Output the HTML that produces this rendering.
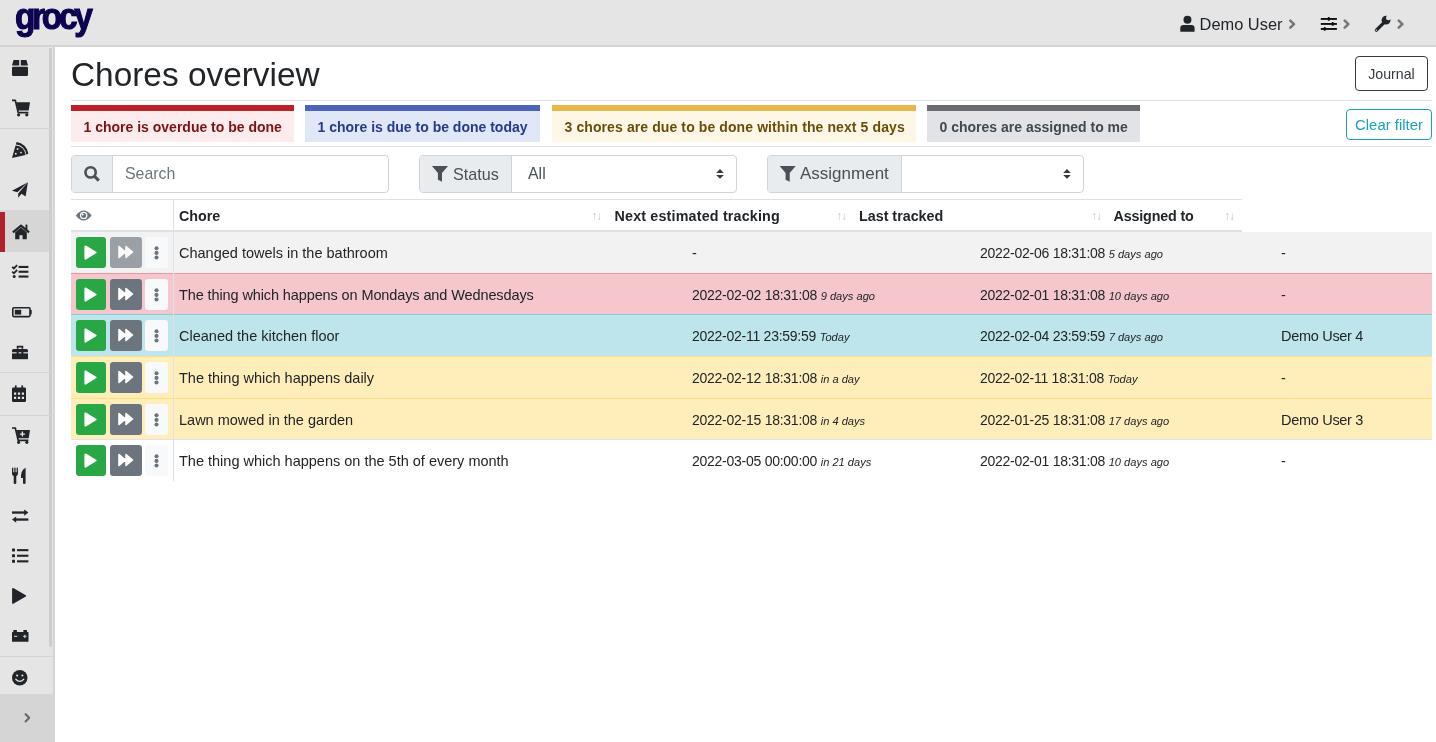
<!DOCTYPE html>
<html><head><meta charset="utf-8">
<style>
*{box-sizing:border-box;margin:0;padding:0}
html,body{width:1436px;height:742px;overflow:hidden;background:#fff;font-family:"Liberation Sans",sans-serif;color:#212529}
.abs{position:absolute}
#nav{left:0;top:0;width:1436px;height:47px;background:#e5e5e5;border-bottom:2px solid #d4d4d4}
#side{left:0;top:47px;width:55px;height:695px;background:#e5e5e5}
#content{left:55px;top:47px;width:1381px;height:695px;background:#fff}
.ico{position:absolute;fill:#212529}
h2.title{position:absolute;left:71px;top:52.8px;font-size:33.4px;font-weight:400;line-height:44px;color:#212529;white-space:nowrap}
.hr{position:absolute;left:71px;width:1361px;height:1px;background:#dee2e6}
.btn{position:absolute;border:1px solid;border-radius:4px;font-size:14.2px;text-align:center;white-space:nowrap}
.msg{position:absolute;top:105px;height:37px;border-top:6px solid;font-weight:700;font-size:14px;line-height:33px;white-space:nowrap;padding-left:12.5px}
.ig{position:absolute;top:155px;height:38px;border:1px solid #ced4da;border-radius:4px;background:#fff}
.pre{position:absolute;left:0;top:0;bottom:0;background:#e9ecef;border-right:1px solid #ced4da;border-radius:3px 0 0 3px}
.txt{position:absolute;white-space:nowrap;line-height:20px}

.tr{position:absolute;left:71px;width:1361px}
.b-play,.b-fwd,.b-dots{position:absolute;height:31px;border-radius:3.2px}
.b-play{left:5px;width:30px;background:#28a745}
.b-play svg{position:absolute;left:8.3px;top:7.6px}
.b-fwd{left:39px;width:32px;background:#6c757d}
.b-fwd svg{position:absolute;left:7px;top:7.5px}
.b-dots{left:74px;width:23px;background:#f8f9fa}
.b-dots i{position:absolute;left:9.6px;width:3.8px;height:3.8px;border-radius:50%;background:#6c757d}
.td{position:absolute;top:12px;line-height:21px;font-size:14.5px;white-space:nowrap;color:#212529}
.dt{font-size:14px;letter-spacing:-0.26px;top:11px}
.dt .ta{letter-spacing:0}
.tr .td{top:11.4px}
.tr .dt{top:10.9px}
.tb .td{top:11px}
.tb .dt{top:10.6px}
.ta{font-style:italic;font-size:11.1px}
.vline{position:absolute;left:173px;top:199px;width:1px;height:282px;background:#dee2e6}
.thead{position:absolute;left:71px;top:199px;width:1171px;height:33px;border-top:1px solid #dee2e6;border-bottom:2px solid #dee2e6}
.th{position:absolute;top:5.6px;margin-left:-1px;line-height:21px;font-weight:700;font-size:14.3px;white-space:nowrap;color:#212529}
.sort{position:absolute;top:6px;margin-left:-1px;font-size:12px;color:#c8c8c8;line-height:21px;letter-spacing:-1px}
</style></head><body><div id="root" style="position:absolute;left:0;top:0;width:1436px;height:742px;will-change:transform">
<div id="nav" class="abs">
  <div class="abs" style="left:15px;top:-3px;font-size:36px;font-weight:700;color:#0b0250;letter-spacing:-3.6px;line-height:40px;transform:scale(0.93,1);-webkit-text-stroke:1.1px #0b0250;transform-origin:0 0">grocy</div>
  <div class="txt" style="left:1199.6px;top:14px;font-size:16.4px;color:#212529">Demo User</div>
</div>
<div id="content" class="abs"></div>

<h2 class="title">Chores overview</h2>
<div class="btn" style="left:1355px;top:56px;width:73px;height:35px;border-color:#343a40;color:#343a40;line-height:34px">Journal</div>
<div class="hr" style="top:100px"></div>
<div class="msg" style="left:71px;width:223px;border-color:#bb2227;background:#fdeced;color:#7d1114">1 chore is overdue to be done</div>
<div class="msg" style="left:305px;width:235px;border-color:#4c63b6;background:#e0e7f7;color:#263a8c">1 chore is due to be done today</div>
<div class="msg" style="left:552px;width:364px;border-color:#e6b84a;background:#fff7e6;color:#6b4d0a;letter-spacing:0.1px">3 chores are due to be done within the next 5 days</div>
<div class="msg" style="left:927px;width:213px;border-color:#6a6c70;background:#e1e3e6;color:#404850">0 chores are assigned to me</div>
<div class="btn" style="left:1346px;top:109px;width:86px;height:31px;border-color:#17a2b8;color:#17a2b8;line-height:30px;font-size:14.9px">Clear filter</div>
<div class="hr" style="top:146px"></div>

<div class="ig" style="left:71px;width:318px">
  <div class="pre" style="width:41px"></div>
  <div class="txt" style="left:53px;top:8px;font-size:15.9px;color:#6c757d">Search</div>
</div>
<div class="ig" style="left:419px;width:318px">
  <div class="pre" style="width:92px"></div>
  <div class="txt" style="left:33px;top:8px;font-size:16.2px;color:#495057">Status</div>
  <div class="txt" style="left:108px;top:8px;font-size:15.9px;color:#495057">All</div>
</div>
<div class="ig" style="left:767px;width:317px">
  <div class="pre" style="width:134px"></div>
  <div class="txt" style="left:32px;top:8px;font-size:17px;color:#495057">Assignment</div>
</div>


<div class="thead">
  <div class="th" style="left:109px">Chore</div><div class="sort" style="left:521px">↑↓</div>
  <div class="th" style="left:544.5px;letter-spacing:0.18px">Next estimated tracking</div><div class="sort" style="left:766px">↑↓</div>
  <div class="th" style="left:789px">Last tracked</div><div class="sort" style="left:1021px">↑↓</div>
  <div class="th" style="left:1043.5px;letter-spacing:-0.15px">Assigned to</div><div class="sort" style="left:1154px">↑↓</div>
</div>
<div class="tr" style="top:232.0px;height:41.0px;background:#f2f2f2;">
  <div class="b-play" style="top:4.8px"><svg width="14" height="16" viewBox="0 0 14 16"><path d="M1.4 2.4 L11.6 8.5 L1.4 14.6 Z" fill="#fff" stroke="#fff" stroke-width="2" stroke-linejoin="round"/></svg></div>
  <div class="b-fwd" style="top:4.8px;opacity:.65;"><svg width="18" height="16" viewBox="0 0 18 16"><path d="M2 2.5 L8.5 8 L2 13.5 Z M9 2.5 L15.5 8 L9 13.5 Z" fill="#fff" stroke="#fff" stroke-width="1.6" stroke-linejoin="round"/></svg></div>
  <div class="b-dots" style="top:4.8px"><svg width="23" height="31" viewBox="0 0 23 31" style="position:absolute;left:0;top:0"><g fill="#6c757d"><circle cx="11.5" cy="11.3" r="2.05"/><circle cx="11.5" cy="15.9" r="2.05"/><circle cx="11.5" cy="20.5" r="2.05"/></g></svg></div>
  <div class="td" style="left:108px">Changed towels in the bathroom</div>
  <div class="td" style="left:621px">-</div>
  <div class="td dt" style="left:909px">2022-02-06 18:31:08 <span class="ta">5 days ago</span></div>
  <div class="td" style="left:1210px;letter-spacing:-0.3px">-</div>
</div>
<div class="tr tb" style="top:273.0px;height:41.0px;background:#f5c6cb;border-top:1px solid #ed969e;">
  <div class="b-play" style="top:4.8px"><svg width="14" height="16" viewBox="0 0 14 16"><path d="M1.4 2.4 L11.6 8.5 L1.4 14.6 Z" fill="#fff" stroke="#fff" stroke-width="2" stroke-linejoin="round"/></svg></div>
  <div class="b-fwd" style="top:4.8px;"><svg width="18" height="16" viewBox="0 0 18 16"><path d="M2 2.5 L8.5 8 L2 13.5 Z M9 2.5 L15.5 8 L9 13.5 Z" fill="#fff" stroke="#fff" stroke-width="1.6" stroke-linejoin="round"/></svg></div>
  <div class="b-dots" style="top:4.8px"><svg width="23" height="31" viewBox="0 0 23 31" style="position:absolute;left:0;top:0"><g fill="#6c757d"><circle cx="11.5" cy="11.3" r="2.05"/><circle cx="11.5" cy="15.9" r="2.05"/><circle cx="11.5" cy="20.5" r="2.05"/></g></svg></div>
  <div class="td" style="left:108px;letter-spacing:-0.11px">The thing which happens on Mondays and Wednesdays</div>
  <div class="td dt" style="left:621px">2022-02-02 18:31:08 <span class="ta">9 days ago</span></div>
  <div class="td dt" style="left:909px">2022-02-01 18:31:08 <span class="ta">10 days ago</span></div>
  <div class="td" style="left:1210px;letter-spacing:-0.3px">-</div>
</div>
<div class="tr tb" style="top:314.0px;height:42.0px;background:#bee5eb;border-top:1px solid #86cfda;">
  <div class="b-play" style="top:4.8px"><svg width="14" height="16" viewBox="0 0 14 16"><path d="M1.4 2.4 L11.6 8.5 L1.4 14.6 Z" fill="#fff" stroke="#fff" stroke-width="2" stroke-linejoin="round"/></svg></div>
  <div class="b-fwd" style="top:4.8px;"><svg width="18" height="16" viewBox="0 0 18 16"><path d="M2 2.5 L8.5 8 L2 13.5 Z M9 2.5 L15.5 8 L9 13.5 Z" fill="#fff" stroke="#fff" stroke-width="1.6" stroke-linejoin="round"/></svg></div>
  <div class="b-dots" style="top:4.8px"><svg width="23" height="31" viewBox="0 0 23 31" style="position:absolute;left:0;top:0"><g fill="#6c757d"><circle cx="11.5" cy="11.3" r="2.05"/><circle cx="11.5" cy="15.9" r="2.05"/><circle cx="11.5" cy="20.5" r="2.05"/></g></svg></div>
  <div class="td" style="left:108px">Cleaned the kitchen floor</div>
  <div class="td dt" style="left:621px">2022-02-11 23:59:59 <span class="ta">Today</span></div>
  <div class="td dt" style="left:909px">2022-02-04 23:59:59 <span class="ta">7 days ago</span></div>
  <div class="td" style="left:1210px;letter-spacing:-0.3px">Demo User 4</div>
</div>
<div class="tr tb" style="top:356.0px;height:42.0px;background:#ffeeba;border-top:1px solid #ffdf7e;">
  <div class="b-play" style="top:4.8px"><svg width="14" height="16" viewBox="0 0 14 16"><path d="M1.4 2.4 L11.6 8.5 L1.4 14.6 Z" fill="#fff" stroke="#fff" stroke-width="2" stroke-linejoin="round"/></svg></div>
  <div class="b-fwd" style="top:4.8px;"><svg width="18" height="16" viewBox="0 0 18 16"><path d="M2 2.5 L8.5 8 L2 13.5 Z M9 2.5 L15.5 8 L9 13.5 Z" fill="#fff" stroke="#fff" stroke-width="1.6" stroke-linejoin="round"/></svg></div>
  <div class="b-dots" style="top:4.8px"><svg width="23" height="31" viewBox="0 0 23 31" style="position:absolute;left:0;top:0"><g fill="#6c757d"><circle cx="11.5" cy="11.3" r="2.05"/><circle cx="11.5" cy="15.9" r="2.05"/><circle cx="11.5" cy="20.5" r="2.05"/></g></svg></div>
  <div class="td" style="left:108px">The thing which happens daily</div>
  <div class="td dt" style="left:621px">2022-02-12 18:31:08 <span class="ta">in a day</span></div>
  <div class="td dt" style="left:909px">2022-02-11 18:31:08 <span class="ta">Today</span></div>
  <div class="td" style="left:1210px;letter-spacing:-0.3px">-</div>
</div>
<div class="tr tb" style="top:398.0px;height:41.0px;background:#ffeeba;border-top:1px solid #ffdf7e;">
  <div class="b-play" style="top:4.8px"><svg width="14" height="16" viewBox="0 0 14 16"><path d="M1.4 2.4 L11.6 8.5 L1.4 14.6 Z" fill="#fff" stroke="#fff" stroke-width="2" stroke-linejoin="round"/></svg></div>
  <div class="b-fwd" style="top:4.8px;"><svg width="18" height="16" viewBox="0 0 18 16"><path d="M2 2.5 L8.5 8 L2 13.5 Z M9 2.5 L15.5 8 L9 13.5 Z" fill="#fff" stroke="#fff" stroke-width="1.6" stroke-linejoin="round"/></svg></div>
  <div class="b-dots" style="top:4.8px"><svg width="23" height="31" viewBox="0 0 23 31" style="position:absolute;left:0;top:0"><g fill="#6c757d"><circle cx="11.5" cy="11.3" r="2.05"/><circle cx="11.5" cy="15.9" r="2.05"/><circle cx="11.5" cy="20.5" r="2.05"/></g></svg></div>
  <div class="td" style="left:108px">Lawn mowed in the garden</div>
  <div class="td dt" style="left:621px">2022-02-15 18:31:08 <span class="ta">in 4 days</span></div>
  <div class="td dt" style="left:909px">2022-01-25 18:31:08 <span class="ta">17 days ago</span></div>
  <div class="td" style="left:1210px;letter-spacing:-0.3px">Demo User 3</div>
</div>
<div class="tr tb" style="top:439.0px;height:42.0px;background:#ffffff;border-top:1px solid #dee2e6;">
  <div class="b-play" style="top:4.8px"><svg width="14" height="16" viewBox="0 0 14 16"><path d="M1.4 2.4 L11.6 8.5 L1.4 14.6 Z" fill="#fff" stroke="#fff" stroke-width="2" stroke-linejoin="round"/></svg></div>
  <div class="b-fwd" style="top:4.8px;"><svg width="18" height="16" viewBox="0 0 18 16"><path d="M2 2.5 L8.5 8 L2 13.5 Z M9 2.5 L15.5 8 L9 13.5 Z" fill="#fff" stroke="#fff" stroke-width="1.6" stroke-linejoin="round"/></svg></div>
  <div class="b-dots" style="top:4.8px"><svg width="23" height="31" viewBox="0 0 23 31" style="position:absolute;left:0;top:0"><g fill="#6c757d"><circle cx="11.5" cy="11.3" r="2.05"/><circle cx="11.5" cy="15.9" r="2.05"/><circle cx="11.5" cy="20.5" r="2.05"/></g></svg></div>
  <div class="td" style="left:108px">The thing which happens on the 5th of every month</div>
  <div class="td dt" style="left:621px">2022-03-05 00:00:00 <span class="ta">in 21 days</span></div>
  <div class="td dt" style="left:909px">2022-02-01 18:31:08 <span class="ta">10 days ago</span></div>
  <div class="td" style="left:1210px;letter-spacing:-0.3px">-</div>
</div>

<div class="vline"></div>
<div class="abs" style="left:0;top:47px;width:49px;height:695px;background:#e5e5e5"></div>
<div class="abs" style="left:49px;top:47px;width:4px;height:695px;background:#e3e3e3"></div>
<div class="abs" style="left:48.8px;top:47.5px;width:2.8px;height:599px;background:#cdcdcd;border-radius:1.4px"></div>
<div class="abs" style="left:53px;top:47px;width:2px;height:695px;background:#d5d5d5"></div>
<div class="abs" style="left:0;top:128px;width:55px;height:1px;background:#d4d4d4"></div>
<div class="abs" style="left:0;top:372px;width:55px;height:1px;background:#d4d4d4"></div>
<div class="abs" style="left:0;top:415px;width:55px;height:1px;background:#d4d4d4"></div>
<div class="abs" style="left:0;top:656px;width:55px;height:1px;background:#d4d4d4"></div>
<div class="abs" style="left:0;top:210px;width:49px;height:42px;background:#d6d6d6"></div>
<div class="abs" style="left:0;top:212px;width:5px;height:40px;background:#b0202f"></div>
<div class="abs" style="left:0;top:694px;width:55px;height:48px;background:#d5d5d5"></div>
<svg class="abs" style="left:0;top:0" width="1436" height="742" viewBox="0 0 1436 742">
<g fill="#212529">
 <!-- box -->
 <path d="M13.6,60 H19.2 V65.6 H12 Z M20.8,60 H26.4 L28,65.6 H20.8 Z"/>
 <rect x="12" y="66.8" width="16" height="9.2" rx="1.3"/>
 <!-- cart -->
 <path d="M12,100.3 H15.3 L18.2,112.6 H28.4" fill="none" stroke="#212529" stroke-width="1.7" stroke-linejoin="round"/>
 <path d="M16.4,102.3 H30 L28.7,110.6 H18.2 Z"/>
 <circle cx="18.6" cy="114.8" r="1.6"/><circle cx="26.8" cy="114.8" r="1.6"/>
 <!-- pizza -->
 <path d="M16.5,142.1 A13.2,13.2 0 0 1 28.4,153.8 L26.2,154.4 A10.9,10.9 0 0 0 15.9,144.5 Z"/>
 <path d="M12,158 L15.5,145.6 A10,10 0 0 1 25.6,155 Z"/>
 <g fill="#e5e5e5"><circle cx="17.6" cy="149" r="0.9"/><circle cx="21" cy="152.6" r="0.9"/><circle cx="15.8" cy="153.8" r="0.95"/></g>
 <!-- paper plane -->
 <path d="M12,190.7 L27.9,182.3 L17.4,192.3 Z"/>
 <path d="M27.9,182.3 L25.6,196.4 L21.5,193.8 L18.2,197.8 L18.2,193.4 Z"/>
 <!-- home -->
 <path d="M12.9,232.3 L21,225.6 L29.1,232.3" fill="none" stroke="#212529" stroke-width="2.2"/>
 <rect x="25.5" y="224.6" width="1.9" height="5.4"/>
 <path d="M15.2,232.2 L21,227.4 L26.8,232.2 V239.2 H22.6 V235.3 H19.4 V239.2 H15.2 Z"/>
 <!-- tasks -->
 <rect x="18.6" y="265.9" width="9.8" height="2.1"/><rect x="18.6" y="270.7" width="9.8" height="2.1"/><rect x="18.6" y="275.5" width="9.8" height="2.1"/>
 <path d="M12.2,266.9 L13.9,268.5 L17.1,265.2 M12.2,271.7 L13.9,273.3 L17.1,270" fill="none" stroke="#212529" stroke-width="1.8"/>
 <circle cx="14.2" cy="276.6" r="1.5"/>
 <!-- battery -->
 <rect x="12.8" y="307.8" width="17.2" height="8.8" rx="1" fill="none" stroke="#212529" stroke-width="1.6"/>
 <rect x="30" y="310" width="1.7" height="4.4"/>
 <rect x="14.8" y="309.8" width="6.4" height="4.8"/>
 <!-- toolbox -->
 <path d="M17.6,348.8 V346.6 H22.4 V348.8" fill="none" stroke="#212529" stroke-width="1.7"/>
 <path d="M12,352.2 V350.6 Q12,349 13.6,349 H26.4 Q28,349 28,350.6 V352.2 Z"/>
 <rect x="12" y="353.4" width="16" height="5.8"/>
 <rect x="16.6" y="351.6" width="2" height="3"/><rect x="21.4" y="351.6" width="2" height="3"/>
 <!-- calendar -->
 <rect x="14.9" y="385.4" width="1.7" height="3.2"/><rect x="21.4" y="385.4" width="1.7" height="3.2"/>
 <path d="M13.3,387.4 H24.7 Q26,387.4 26,388.7 V400.7 Q26,402 24.7,402 H13.3 Q12,402 12,400.7 V388.7 Q12,387.4 13.3,387.4 Z M14,392.6 V394.8 H16.2 V392.6 Z M17.9,392.6 V394.8 H20.1 V392.6 Z M21.8,392.6 V394.8 H24 V392.6 Z M14,396.8 V399 H16.2 V396.8 Z M17.9,396.8 V399 H20.1 V396.8 Z M21.8,396.8 V399 H24 V396.8 Z" fill-rule="evenodd"/>
 <!-- cart plus -->
 <path d="M12,428 H15.3 L18.2,440.3 H28.4" fill="none" stroke="#212529" stroke-width="1.7" stroke-linejoin="round"/>
 <path d="M16.4,430 H30 L28.7,438.3 H18.2 Z"/>
 <circle cx="18.6" cy="442.3" r="1.6"/><circle cx="26.8" cy="442.3" r="1.6"/>
 <path d="M22.4,431.6 V436.6 M19.9,434.1 H24.9" stroke="#e5e5e5" stroke-width="1.4"/>
 <!-- utensils -->
 <rect x="12" y="467.7" width="1.3" height="6"/><rect x="14.3" y="467.7" width="1.3" height="6"/><rect x="16.6" y="467.7" width="1.3" height="6"/>
 <path d="M12,472.3 H17.9 V473.8 Q17.9,475.6 16.3,475.9 V483 Q16.3,484 15,484 Q13.7,484 13.7,483 V475.9 Q12,475.6 12,473.8 Z"/>
 <path d="M25.6,467.7 V483 Q25.6,484 24.3,484 Q23,484 23,483 V478 H21 Q20.6,470.3 25.6,467.7 Z"/>
 <!-- exchange -->
 <rect x="12" y="511.4" width="13.4" height="2.3"/><path d="M24.2,509.4 L28.4,512.55 L24.2,515.7 Z"/>
 <rect x="15" y="518.4" width="13.4" height="2.3"/><path d="M16.2,516.4 L12,519.55 L16.2,522.7 Z"/>
 <!-- list -->
 <rect x="12" y="548.6" width="3" height="3" rx="0.5"/><rect x="12" y="554.2" width="3" height="3" rx="0.5"/><rect x="12" y="559.8" width="3" height="3" rx="0.5"/>
 <rect x="17" y="549.1" width="11.4" height="2.1"/><rect x="17" y="554.7" width="11.4" height="2.1"/><rect x="17" y="560.3" width="11.4" height="2.1"/>
 <!-- play -->
 <path d="M12.9,588.8 L25.4,595.9 L12.9,603 Z" stroke="#212529" stroke-width="1.6" stroke-linejoin="round"/>
 <!-- car battery -->
 <rect x="13.3" y="630" width="3.6" height="2.4"/><rect x="23.4" y="630" width="3.6" height="2.4"/>
 <rect x="12" y="632" width="16.5" height="9.7" rx="0.5"/>
 <path d="M14.1,636.4 H17.3 M23.2,636.4 H26.4 M24.8,634.8 V638" stroke="#bdbdbd" stroke-width="1.3"/>
 <!-- smile -->
 <circle cx="19.75" cy="677.7" r="7.75"/>
 <g fill="#e5e5e5"><circle cx="17.1" cy="675.4" r="1"/><circle cx="22.4" cy="675.4" r="1"/></g>
 <path d="M15.8,679.2 Q19.75,683.4 23.7,679.2" fill="none" stroke="#e5e5e5" stroke-width="1.3" stroke-linecap="round"/>
</g>
<!-- bottom chevron -->
<path d="M25.6,714.2 L29.2,717.8 L25.6,721.4" fill="none" stroke="#666" stroke-width="2.1" stroke-linecap="round" stroke-linejoin="round"/>
<!-- nav right -->
<g fill="#212529">
 <circle cx="1187.45" cy="19.8" r="4"/>
 <path d="M1180.3,31.8 V28.3 Q1180.3,25.1 1183.5,25.1 H1191.4 Q1194.6,25.1 1194.6,28.3 V31.8 Z"/>
</g>
<g fill="#111">
 <rect x="1320.8" y="18" width="16.1" height="1.9"/><rect x="1320.8" y="23" width="16.1" height="1.9"/><rect x="1320.8" y="28" width="16.1" height="1.9"/>
 <rect x="1327.8" y="17.1" width="2" height="3.7" rx="0.6"/><rect x="1331.7" y="22.1" width="2" height="3.7" rx="0.6"/><rect x="1323.7" y="27.1" width="2" height="3.7" rx="0.6"/>
</g>
<g>
 <path d="M1376.4,30.2 L1384,22.6" stroke="#212529" stroke-width="3.3" stroke-linecap="round"/>
 <circle cx="1386" cy="20.2" r="4.4" fill="#212529"/>
 <circle cx="1388.3" cy="17.9" r="2.3" fill="#e5e5e5"/>
 <path d="M1388.3,15.6 L1392.5,15.6 L1392.5,20.2 L1390.6,17.9 Z" fill="#e5e5e5"/>
 <circle cx="1376.3" cy="30.3" r="0.75" fill="#e5e5e5"/>
</g>
<g fill="none" stroke="#777" stroke-width="2.6" stroke-linecap="round" stroke-linejoin="round">
 <path d="M1290.3,20.6 L1294,24.1 L1290.3,27.6"/>
 <path d="M1344.7,20.6 L1348.4,24.1 L1344.7,27.6"/>
 <path d="M1398.7,20.6 L1402.4,24.1 L1398.7,27.6"/>
</g>
<!-- search -->
<g fill="none" stroke="#495057">
 <circle cx="90.6" cy="172.4" r="5.1" stroke-width="2.6"/>
 <path d="M94.6,176.4 L98.8,180.6" stroke-width="3"/>
</g>
<!-- filters -->
<path d="M431.9,166.1 H448 L442,172.9 V181.8 L437.9,179.8 V172.9 Z" fill="#495057"/>
<path d="M779.6,166.1 H795.7 L789.7,172.9 V181.8 L785.6,179.8 V172.9 Z" fill="#495057"/>
<!-- select arrows -->
<path d="M720,169.1 L723.8,172.9 H716.2 Z M716.2,175 H723.8 L720,178.8 Z" fill="#343a40"/>
<path d="M1067,169.1 L1070.8,172.9 H1063.2 Z M1063.2,175 H1070.8 L1067,178.8 Z" fill="#343a40"/>
<!-- eye -->
<path d="M75.8,215.4 Q83.7,205.4 91.6,215.4 Q83.7,225.4 75.8,215.4 Z" fill="#6c757d"/>
<circle cx="83.7" cy="215.4" r="3.7" fill="#fff"/>
<circle cx="83.7" cy="215.5" r="2.5" fill="#6c757d"/>
<circle cx="82.6" cy="214.5" r="0.9" fill="#fff"/>
</svg>
</div></body></html>
